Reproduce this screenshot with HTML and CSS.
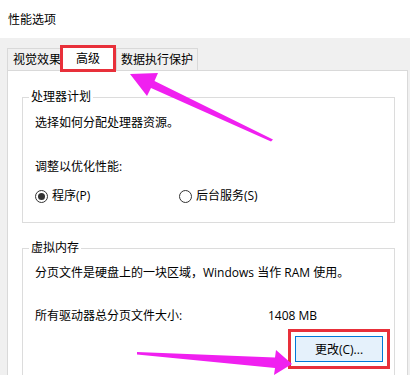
FILE: index.html
```html
<!DOCTYPE html>
<html lang="zh-CN">
<head>
    <meta charset="UTF-8">
    <meta name="viewport" content="width=device-width, initial-scale=1.0">
    <title>性能选项</title>
    <link rel="stylesheet" href="styles.css">
</head>
<body>
    <div class="window">
        <div class="titlebar">性能选项</div>

        <div class="client">
            <!-- 탭 -->
            <div class="tabs">
                <div class="tab first">视觉效果</div>
                <div class="tab active">高级</div>
                <div class="tab">数据执行保护</div>
            </div>

            <div class="panel">
                <fieldset class="group">
                    <legend>处理器计划</legend>
                    <p class="line top">选择如何分配处理器资源。</p>
                    <p class="line gap">调整以优化性能:</p>
                    <div class="radios">
                        <label class="radio wide"><span class="dot checked"></span>程序(P)</label>
                        <label class="radio"><span class="dot"></span>后台服务(S)</label>
                    </div>
                </fieldset>

                <fieldset class="group memory">
                    <legend>虚拟内存</legend>
                    <p class="line top2">分页文件是硬盘上的一块区域，Windows 当作 RAM 使用。</p>
                    <div class="size-row">
                        <span class="size-label">所有驱动器总分页文件大小:</span>
                        <span>1408 MB</span>
                    </div>
                    <div class="button-row">
                        <button class="change">更改(C)...</button>
                    </div>
                </fieldset>
            </div>
        </div>

        <!-- 화살표 표시 -->
        <svg class="arrows" width="410" height="375" viewBox="0 0 410 375">
            <polygon points="130,74 158,73 154.5,81 273,139.5 271,141.5 151,88 147,96" />
            <polygon points="137,352 275,357.5 276,350 292,364 274,375 275,368 137,354.5" />
        </svg>
    </div>
</body>
</html>
```

FILE: styles.css
```css
body{
    margin: 0;
    font-family: "Open Sans", "Noto Sans CJK SC", sans-serif;
    font-size: 12px;
    color: #000;
    background-color: #f0f0f0;
}
.window{
    position: relative;
    width: 410px;
    height: 375px;
    overflow: hidden;
    background-color: #f0f0f0;
}
.titlebar{
    height: 38px;
    line-height: 40px;
    padding-left: 8px;
    background: white;
}
.client{
    padding: 7px 2px 0 7px;
}
/* 탭 줄 */
.tabs{
    display: flex;
    align-items: flex-end;
    height: 25px;
}
.tab{
    box-sizing: border-box;
    height: 22px;
    line-height: 22px;
    border: 1px solid #d9d9d9;
    border-bottom: none;
    background-color: #f0f0f0;
    white-space: nowrap;
    overflow: hidden;
    width: 82px;
    text-align: center;
}
.tab.first{
    width: 56px;
    padding-left: 5px;
    text-align: left;
}
.tab.active{
    position: relative;
    z-index: 1;
    width: 56px;
    height: 27px;
    line-height: 26px;
    margin-left: -3px;
    margin-bottom: -2px;
    background: white;
    outline: 3px solid #e8303a;
    outline-offset: -3px;
}
.panel{
    height: 320px;
    padding: 18px 12px 0 14px;
    background: white;
    border: 1px solid #d9d9d9;
}
/* 그룹 상자 */
.group{
    margin: 0;
    padding: 0 11px 18px 12px;
    border: 1px solid #dcdcdc;
}
.group legend{
    padding: 0 2px;
    margin-left: -6px;
    line-height: 16px;
}
.memory{
    margin-top: 17px;
}
.line{
    margin: 0;
    line-height: 16px;
}
.line.top{
    margin-top: 10px;
}
.line.gap{
    margin-top: 28px;
}
.line.top2{
    margin-top: 9px;
}
.radios{
    display: flex;
    margin-top: 13px;
    line-height: 16px;
}
.radio{
    display: flex;
    align-items: center;
    gap: 4px;
}
.radio.wide{
    width: 144px;
}
.dot{
    box-sizing: border-box;
    width: 13px;
    height: 13px;
    border: 1px solid #333;
    border-radius: 50%;
    display: flex;
    align-items: center;
    justify-content: center;
}
.dot.checked::after{
    content: "";
    width: 7px;
    height: 7px;
    border-radius: 50%;
    background-color: #333;
}
.size-row{
    display: grid;
    grid-template-columns: 233px auto;
    margin-top: 27px;
    line-height: 16px;
}
.button-row{
    display: flex;
    justify-content: flex-end;
    margin-top: 12px;
}
.change{
    width: 88px;
    height: 26px;
    font-family: inherit;
    font-size: 12px;
    background-color: #e5f1fb;
    border: 1px solid #0078d7;
    padding: 0;
    outline: 3px solid #e8303a;
    outline-offset: 4px;
}
.arrows{
    position: absolute;
    top: 0;
    left: 0;
    pointer-events: none;
    fill: #f020f0;
}
```
